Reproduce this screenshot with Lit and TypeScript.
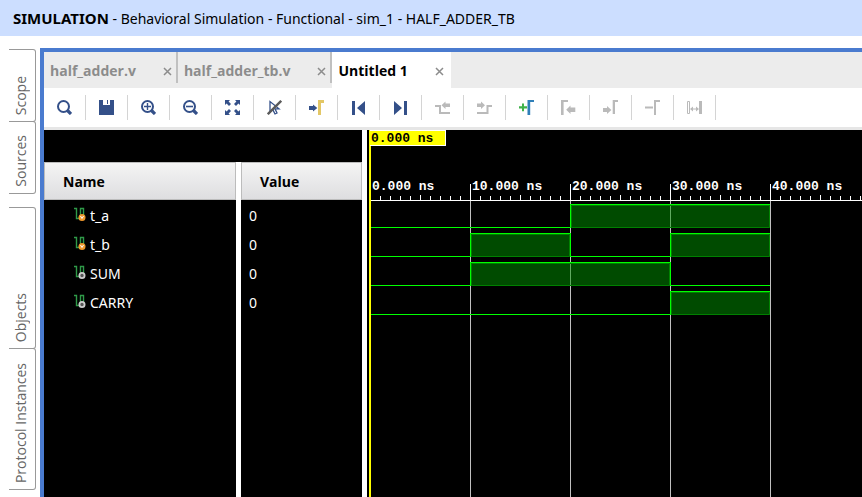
import { LitElement, html, svg, css } from "lit";
import { customElement, property, state } from "lit/decorators.js";
import { classMap } from "lit/directives/class-map.js";

interface Signal {
  name: string;
  value: string;
  kind: "reg" | "wire";
  /** Time spans, in ns, during which the signal is high. */
  high: [number, number][];
}

const SIGNALS: Signal[] = [
  { name: "t_a", value: "0", kind: "reg", high: [[20, 40]] },
  { name: "t_b", value: "0", kind: "reg", high: [[10, 20], [30, 40]] },
  { name: "SUM", value: "0", kind: "wire", high: [[10, 30]] },
  { name: "CARRY", value: "0", kind: "wire", high: [[30, 40]] },
];

const END_TIME = 40;

const lens = svg`
  <circle cx="6.5" cy="6.5" r="5.5" fill="none" stroke="#345089" stroke-width="2"/>
  <path d="M10.5 10.5L14 14" stroke="#345089" stroke-width="3.2"/>`;

const TOOLS = [
  { label: "Search", icon: lens },
  {
    label: "Save waveform",
    icon: svg`<path fill="#345089" d="M0 0H4V5H11V0H15V15H0Z"/>
      <path fill="#345089" d="M8 0H9V4H8Z"/>`,
  },
  { label: "Zoom in", icon: svg`${lens}<path d="M3 6.5H10M6.5 3V10" stroke="#345089" stroke-width="1.4"/>` },
  { label: "Zoom out", icon: svg`${lens}<path d="M3 6.5H10" stroke="#345089" stroke-width="1.6"/>` },
  {
    label: "Zoom fit",
    icon: svg`<path fill="#345089" d="M0 0H5L3.6 1.6L6 4L4 6L1.6 3.6L0 5Z M15 0V5L13.4 3.6L11 6L9 4L11.4 1.6L10 0Z M0 15V10L1.6 11.4L4 9L6 11L3.6 13.4L5 15Z M15 15H10L11.4 13.4L9 11L11 9L13.4 11.4L15 10Z"/>`,
  },
  {
    label: "Toggle pointer",
    icon: svg`<path d="M3 1.5V12L5.8 9.6L8 14L10 13L8 8.8H12Z" fill="none" stroke="#345089" stroke-width="1.3"/>
      <path d="M.8 14.2L14.2 .8" stroke="#5a5a5a" stroke-width="2.4"/>`,
  },
  {
    label: "Go to cursor",
    icon: svg`<path fill="#345089" d="M0 6H4V4.5L8.3 8L4 11.5V10H0Z"/><path fill="#e3c766" d="M9 0H15V3H12V15H9Z"/>`,
  },
  { label: "Go to start", icon: svg`<path fill="#345089" d="M1 1H4V15H1Z M14 1V15L6 8Z"/>` },
  { label: "Go to end", icon: svg`<path fill="#345089" d="M14 1H11V15H14Z M1 1V15L9 8Z"/>` },
  {
    label: "Previous transition",
    icon: svg`<path fill="#bababa" d="M0 5H6V12H15V14H4V7H0Z M15 3.5H10.5V1.5L6.5 5.2L10.5 9V7H15Z"/>`,
  },
  {
    label: "Next transition",
    icon: svg`<path fill="#bababa" d="M15 5H9.5V12H0V14H11.5V7H15Z M0 3.5H4V1.5L8 5.2L4 9V7H0Z"/>`,
  },
  {
    label: "Add marker",
    icon: svg`<path fill="#3fb24a" d="M0 6.3H3V3.5H5V6.3H8V8.5H5V11.3H3V8.5H0Z"/><path fill="#2f7fb8" d="M8.5 0H15V2H11.2V15H8.5Z"/>`,
  },
  {
    label: "Previous marker",
    icon: svg`<path fill="#bababa" d="M0 0H7V2H2.6V15H0Z M14.3 7.5H9.5V5.5L5.2 9.7L9.5 14V12H14.3Z"/>`,
  },
  {
    label: "Next marker",
    icon: svg`<path fill="#bababa" d="M9.7 0H15V2H12V14H9.7Z M0 8H4V6L8.4 10L4 14V12H0Z"/>`,
  },
  { label: "Remove marker", icon: svg`<path fill="#bababa" d="M9 0H15V2H11V15H9Z M0 6.5H8V8.5H0Z"/>` },
  {
    label: "Swap markers",
    icon: svg`<path fill="none" stroke="#bababa" d="M.5 1.5H2.5V13.5H.5Z"/><path fill="#bababa" d="M12 1H15V14H12Z M3 9L6 6.5V8.5H9V6.5L12 9L9 11.5V9.5H6V11.5Z"/>`,
  },
];

@customElement("wave-view")
export class WaveView extends LitElement {
  @property({ attribute: false }) signals: Signal[] = [];

  static styles = css`
    :host { display: block; overflow: hidden; background: #000; }
    .canvas { display: block; width: 100%; height: 100%; }
    .time { font: bold 13px "Liberation Mono", monospace; fill: #fff; white-space: pre; }
    .cursor-time { fill: #000; }
  `;

  private x(t: number) {
    return 3 + t * 10;
  }

  private trace(s: Signal, row: number) {
    const top = 74 + row * 29;
    const low = top + 23;
    let at = 0;
    const lines: unknown[] = [];
    for (const [from, to] of s.high) {
      const a = this.x(from);
      const w = this.x(to) - a;
      lines.push(svg`
        <rect x=${this.x(at)} y=${low} width=${a - this.x(at)} height="1" fill="#00ff00"/>
        <rect x=${a} y=${top} width=${w} height="24" fill="#009600" fill-opacity=".5"/>
        <path d="M${a + 1.5} ${low + 0.5}V${top + 1.5}H${a + w - 0.5}V${low + 0.5}Z" fill="none" stroke="#008000"/>
        <rect x=${a} y=${top} width=${w} height="1" fill="#00ff00"/>
        <rect x=${a} y=${top} width="1" height="24" fill="#00ff00"/>
        ${to < END_TIME ? svg`<rect x=${a + w} y=${top} width="1" height="24" fill="#00ff00"/>` : ""}`);
      at = to;
    }
    lines.push(svg`<rect x=${this.x(at)} y=${low} width=${this.x(END_TIME) - this.x(at)} height="1" fill="#00ff00"/>`);
    return lines;
  }

  render() {
    const ticks = Array.from({ length: 200 }, (_, t) => t);
    const majors = ticks.filter((t) => t % 10 === 0 && t <= END_TIME);
    return html`<svg class="canvas" role="img" aria-label="Waveforms">
      ${majors.map((t) => svg`<rect x=${this.x(t)} y="71" width="1" height="100%" fill="#c0c0c0"/>`)}
      ${this.signals.map((s, i) => this.trace(s, i))}
      <rect x="3" y="70" width="100%" height="1" fill="#fff"/>
      ${ticks.map((t) => {
        const h = t % 10 === 0 ? 16 : t % 5 === 0 ? 5 : 4;
        return svg`<rect x=${this.x(t)} y=${70 - h} width="1" height=${h} fill="#fff"/>`;
      })}
      ${majors.map((t) => svg`<text class="time" x=${this.x(t) + 2} y="60">${t.toFixed(3)} ns</text>`)}
      <rect x="2" y="0" width="2" height="100%" fill="#ffff00"/>
      <rect x="3" y="0" width="76" height="16" fill="#fff"/>
      <rect x="3" y="1" width="75" height="14" fill="#ffff00"/>
      <text class="time cursor-time" x="4" y="12">0.000 ns</text>
    </svg>`;
  }
}

@customElement("app-root")
export class AppRoot extends LitElement {
  @state() private activeTab = "Untitled 1";

  private tabs = ["half_adder.v", "half_adder_tb.v", "Untitled 1"];

  static styles = css`
    :host {
      display: flex;
      flex-direction: column;
      min-height: 100vh;
      background: #fff;
      color: #000;
      font: 14px/20px "Open Sans", "Noto Sans", sans-serif;
    }
    button {
      margin: 0;
      padding: 0;
      border: 0;
      background: none;
      color: inherit;
      font: inherit;
      text-align: left;
    }
    .title {
      height: 36px;
      box-sizing: border-box;
      padding: 8px 13px;
      background: #ccdeff;
      font: 400 14px/20px "Noto Sans", sans-serif;
      margin: 0;
      white-space: nowrap;
    }
    .mode { font-size: 15px; font-weight: 700; }
    .body { flex: 1; display: flex; padding-top: 12px; }
    .side { flex: none; width: 27px; margin: 1px 4px 0 9px; display: flex; flex-direction: column; }
    .group { display: flex; flex-direction: column; margin-bottom: 14px; }
    .side-tab {
      box-sizing: border-box;
      height: 73px;
      margin-bottom: -1px;
      padding: 0 2px 6px 0;
      border: 1px solid #999;
      border-left: 0;
      border-radius: 0 3px 3px 0;
      display: flex;
      align-items: flex-end;
      justify-content: center;
      color: #666;
    }
    .side-tab.tall { height: 142px; }
    .side-label { writing-mode: vertical-rl; transform: rotate(180deg); white-space: nowrap; }
    .main {
      flex: 1;
      min-width: 0;
      display: flex;
      flex-direction: column;
      border: solid #4a7bcf;
      border-width: 4px 0 0 4px;
    }
    .tabs { display: flex; height: 36px; background: #ececec; }
    .tab {
      display: flex;
      align-items: center;
      gap: 27px;
      padding: 2px 4px 0 6px;
      color: #8c8c8c;
      font-weight: 700;
    }
    .divided::after { content: ""; align-self: flex-start; width: 2px; height: 31px; margin: -2px -4px 0 -23px; background: #c0c0c0; }
    .tab.active { background: #fff; color: #000; padding-right: 7px; }
    .close { width: 9px; height: 9px; }
    .icon { display: block; }
    .tools { display: flex; align-items: center; height: 39px; border-bottom: 3px solid #e6e6e6; }
    .tool {
      flex: none;
      width: 42px;
      height: 25px;
      border-right: 1px solid #d4d4d4;
      display: flex;
      align-items: center;
      justify-content: center;
    }
    .work { flex: 1; display: flex; }
    .objects {
      flex: none;
      padding-top: 32px;
      border-right: 5px solid #fff;
      background: linear-gradient(#fff, #fff) 192px 32px / 5px 100% no-repeat #000;
    }
    .grid { border-collapse: separate; border-spacing: 0; table-layout: fixed; width: 318px; color: #fff; }
    .grid th {
      box-sizing: border-box;
      height: 38px;
      padding: 2px 18px 0;
      border: 1px solid #bcbcbc;
      background: linear-gradient(#f4f4f4, #dedee0);
      color: #000;
      text-align: left;
      font-weight: 700;
    }
    .grid th.gap, .grid td.gap { width: 5px; padding: 0; border: 0; background: #fff; }
    .name-col { width: 192px; }
    .gap-col { width: 5px; }
    .grid td { height: 29px; padding: 2px 8px 0; box-sizing: border-box; font-family: "Noto Sans", sans-serif; }
    .signal { display: flex; align-items: center; gap: 4px; padding-left: 22px; }
    .wave { flex: 1; min-width: 0; }
  `;

  private signalIcon(kind: Signal["kind"]) {
    return html`<svg class="icon" width="12" height="18" viewBox="0 0 12 18" aria-hidden="true">
      <path d="M0 1.5H2.5V11.5H6.5V1.5H9.5V8" fill="none" stroke="#2f9a48" stroke-width="1.4"/>
      ${kind === "reg"
        ? svg`<circle cx="8" cy="10.5" r="3.5" fill="#f0982c"/><path d="M6.5 9L8 11.5L9.5 9" stroke="#fff" fill="none"/>`
        : svg`<circle cx="8" cy="10.5" r="2.6" fill="#555" stroke="#ccc" stroke-width="1.8"/>`}
    </svg>`;
  }

  private sideTab(label: string, tall = false) {
    return html`<button class=${classMap({ "side-tab": true, tall })}><span class="side-label">${label}</span></button>`;
  }

  render() {
    return html`
      <h1 class="title"><b class="mode">SIMULATION</b> - Behavioral Simulation - Functional - sim_1 - HALF_ADDER_TB</h1>
      <div class="body">
        <nav class="side">
          <div class="group">${this.sideTab("Scope")}${this.sideTab("Sources")}</div>
          <div class="group">${this.sideTab("Objects", true)}${this.sideTab("Protocol Instances", true)}</div>
        </nav>
        <main class="main">
          <div class="tabs">
            ${this.tabs.map((t) => html`
              <div class=${classMap({ tab: true, active: t === this.activeTab, divided: t !== this.activeTab })}>
                <button @click=${() => (this.activeTab = t)}>${t}</button>
                <button class="close" aria-label="Close ${t}">
                  <svg class="icon" width="9" height="9" viewBox="0 0 9 9"><path d="M1 1L8 8M8 1L1 8" stroke="#8c8c8c" stroke-width="1.5"/></svg>
                </button>
              </div>`)}
          </div>
          <div class="tools">
            ${TOOLS.map((t) => html`<button class="tool" aria-label=${t.label}>
              <svg class="icon" width="15" height="15" viewBox="0 0 15 15">${t.icon}</svg>
            </button>`)}
          </div>
          <div class="work">
            <div class="objects">
              <table class="grid">
                <colgroup><col class="name-col"><col class="gap-col"><col></colgroup>
                <thead><tr><th>Name</th><th class="gap"></th><th>Value</th></tr></thead>
                <tbody>
                  ${SIGNALS.map((s) => html`<tr>
                    <td><div class="signal">${this.signalIcon(s.kind)}${s.name}</div></td>
                    <td class="gap"></td>
                    <td>${s.value}</td>
                  </tr>`)}
                </tbody>
              </table>
            </div>
            <wave-view class="wave" .signals=${SIGNALS}></wave-view>
          </div>
        </main>
      </div>`;
  }
}
